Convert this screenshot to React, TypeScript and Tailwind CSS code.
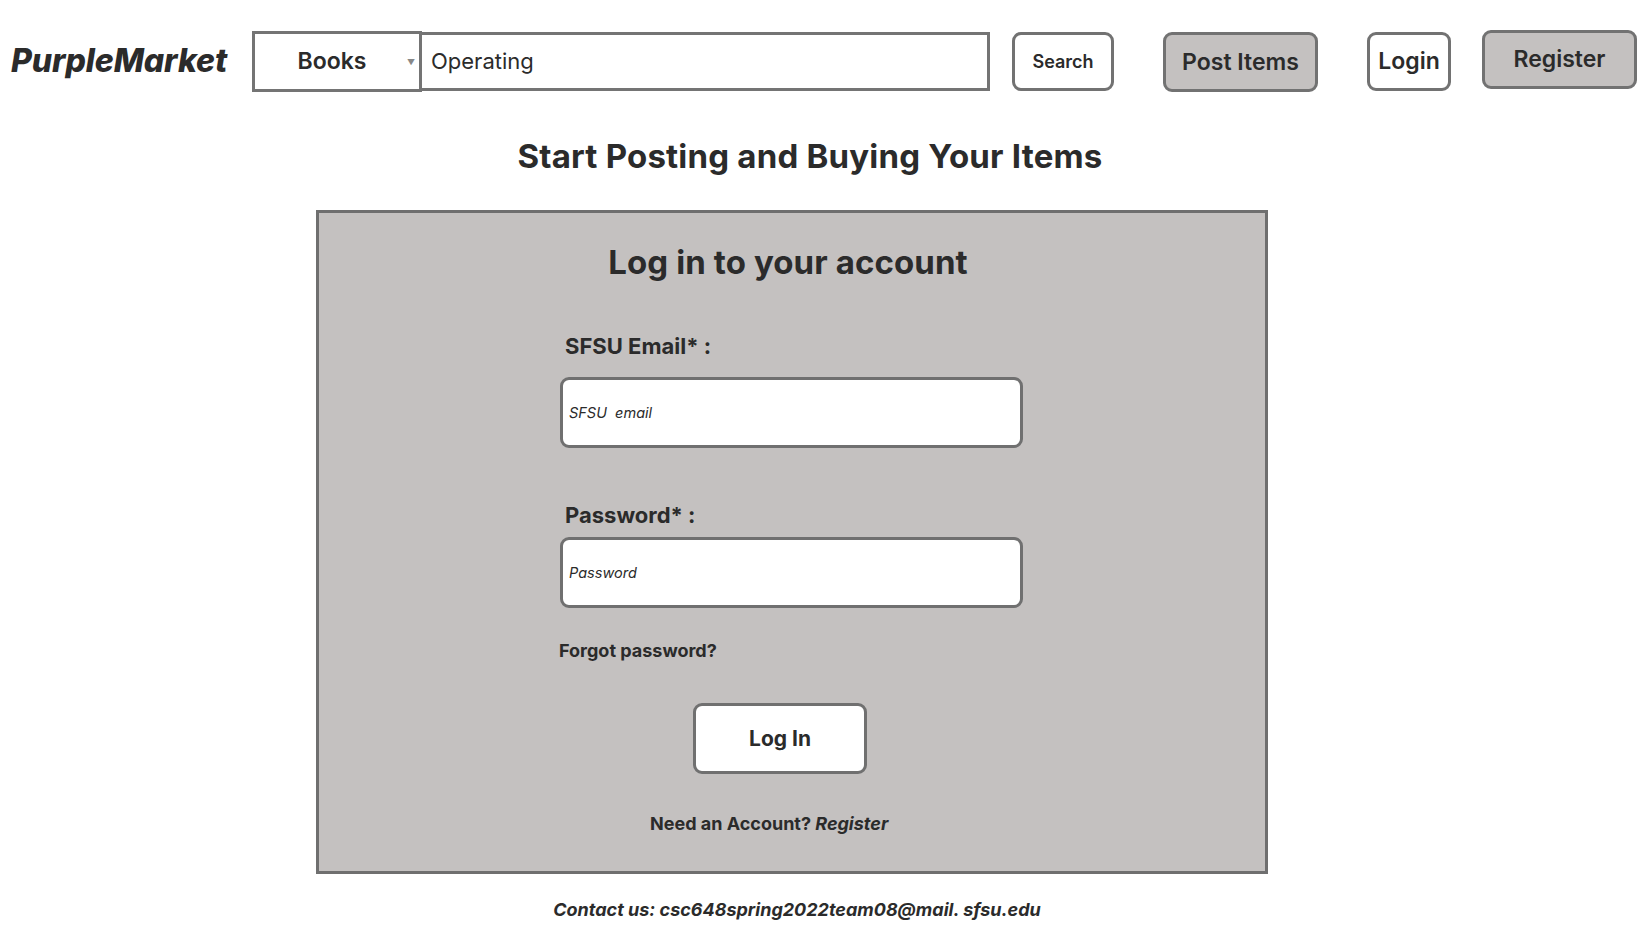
import React from "react";

export default function App() {
  const font = { fontFamily: "Inter, 'Noto Sans', sans-serif" };
  return (
    <div className="w-[1650px] h-[927px] bg-white text-[#2b2b2b] overflow-hidden" style={font}>
      {/* Header */}
      <div className="flex items-start pt-[31px]">
        <div className="w-[252px] pl-[11px] h-[60px] flex items-center">
          <span className="text-[32px] font-extrabold italic tracking-[-0.1px]">PurpleMarket</span>
        </div>
        <div className="relative w-[170px] h-[61px] border-[3px] border-[#747474] bg-white flex items-center justify-center">
          <span className="text-[23px] font-semibold pr-[10px]">Books</span>
          <span className="absolute right-[4px] top-[22px] text-[8px] text-[#888]">▼</span>
        </div>
        <div className="w-[568px] h-[59px] mt-[1px] border-[3px] border-l-0 border-[#747474] bg-white flex items-center pl-[9px]">
          <span className="text-[22px]">Operating</span>
        </div>
        <button className="ml-[22px] mt-[1px] w-[102px] h-[59px] rounded-[9px] border-[3px] border-[#727272] bg-white text-[18px] font-semibold">
          Search
        </button>
        <button className="ml-[49px] mt-[1px] w-[155px] h-[60px] rounded-[9px] border-[3px] border-[#727272] bg-[#c4c1c0] text-[23px] font-semibold">
          Post Items
        </button>
        <button className="ml-[49px] mt-[1px] w-[84px] h-[59px] rounded-[9px] border-[3px] border-[#727272] bg-white text-[23px] font-semibold">
          Login
        </button>
        <button className="ml-[31px] mt-[-1px] w-[155px] h-[59px] rounded-[9px] border-[3px] border-[#727272] bg-[#c4c1c0] text-[23px] font-semibold">
          Register
        </button>
      </div>

      {/* Heading */}
      <h1 className="mt-[44px] pr-[30px] text-center text-[33px] leading-[40px] font-bold tracking-[0.2px]">
        Start Posting and Buying Your Items
      </h1>

      {/* Card */}
      <div className="ml-[316px] mt-[34px] w-[952px] h-[664px] border-[3px] border-[#6f6f6f] bg-[#c4c1c0]">
        <h2 className="mt-[29px] pr-[8px] text-center text-[33px] leading-[40px] font-bold tracking-[0.1px]">
          Log in to your account
        </h2>
        <div className="mt-[50px] pl-[246px] text-[22px] leading-[28px] font-bold">SFSU Email* :</div>
        <div className="mt-[17px] ml-[241px] w-[463px] h-[71px] rounded-[9px] border-[3px] border-[#707070] bg-white flex items-center pl-[6px]">
          <span className="text-[14.5px] italic">SFSU&nbsp; email</span>
        </div>
        <div className="mt-[53px] pl-[246px] text-[22px] leading-[28px] font-bold">Password* :</div>
        <div className="mt-[8px] ml-[241px] w-[463px] h-[71px] rounded-[9px] border-[3px] border-[#707070] bg-white flex items-center pl-[6px]">
          <span className="text-[14.5px] italic">Password</span>
        </div>
        <div className="mt-[31px] pl-[240px] text-[18px] leading-[24px] font-bold">Forgot password?</div>
        <button className="mt-[40px] ml-[374px] w-[174px] h-[71px] rounded-[9px] border-[3px] border-[#707070] bg-white text-[21px] font-bold block">
          Log In
        </button>
        <div className="mt-[38px] pl-[331px] text-[18px] leading-[24px] font-bold">
          Need an Account? <span className="italic">Register</span>
        </div>
      </div>

      {/* Footer */}
      <div className="mt-[24px] pr-[56px] text-center text-[18px] leading-[24px] font-bold italic">
        Contact us: csc648spring2022team08@mail. sfsu.edu
      </div>
    </div>
  );
}
